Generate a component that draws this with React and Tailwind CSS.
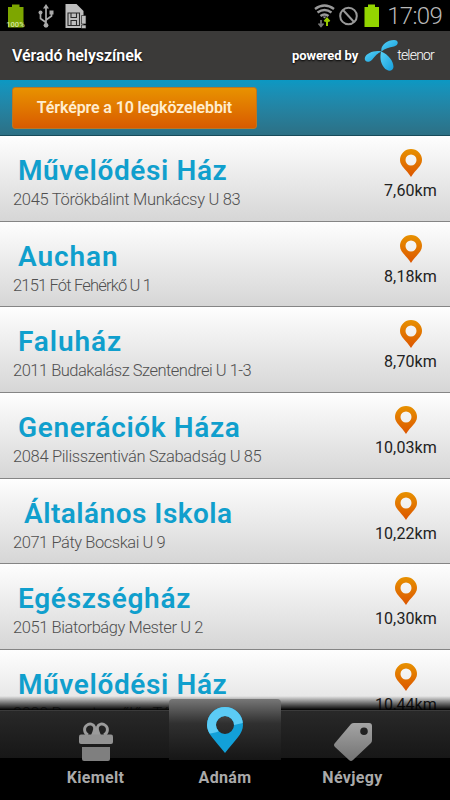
const places = [
  { name: 'Művelődési Ház', address: '2045 Törökbálint Munkácsy U 83', km: '7,60km', title: 'ml-[18px] tracking-[0.62px]', sub: 'tracking-[-0.3px]' },
  { name: 'Auchan', address: '2151 Fót Fehérkő U 1', km: '8,18km', title: 'ml-[18px] tracking-[0.9px]', sub: 'tracking-[-0.82px]' },
  { name: 'Faluház', address: '2011 Budakalász Szentendrei U 1-3', km: '8,70km', title: 'ml-[18px] tracking-[0.9px]', sub: 'tracking-[-0.5px]' },
  { name: 'Generációk Háza', address: '2084 Pilisszentiván Szabadság U 85', km: '10,03km', title: 'ml-[18px] tracking-[0.62px]', sub: 'tracking-[-0.35px]' },
  { name: 'Általános Iskola', address: '2071 Páty Bocskai U 9', km: '10,22km', title: 'ml-[24px] tracking-[0.48px]', sub: 'tracking-[-0.45px]' },
  { name: 'Egészségház', address: '2051 Biatorbágy Mester U 2', km: '10,30km', title: 'ml-[18px] tracking-[0.7px]', sub: 'tracking-[-0.42px]' },
  { name: 'Művelődési Ház', address: '2090 Remeteszőlős Tó U 3', km: '10,44km', title: 'ml-[18px] tracking-[0.62px]', sub: 'tracking-[-0.42px]' },
];

function StatusBar() {
  return (
    <header className="flex h-[31px] shrink-0 items-center bg-black">
      <svg className="ml-[6px] h-[28px] w-[84px]" viewBox="0 0 84 28">
        <path d="M6 2.500h7.500V5h4v20.500H2V5h4z" fill="#7da600" />
        <text x="9.5" y="24.500" textAnchor="middle" fontSize="7.500" fontWeight="500" fontFamily="Roboto, sans-serif" fill="#d5e5a0">100%</text>
        <path d="M40 5v17M40 20.500l-5.500-4V10M40 18l5.500-4V10" stroke="#aaa" strokeWidth="1.700" fill="none" />
        <path d="M37 6.500 40 2l3 4.500z" fill="#aaa" />
        <circle cx="40" cy="23.300" r="2.400" fill="#aaa" />
        <circle cx="34.500" cy="10.500" r="2" fill="#aaa" />
        <path d="M43.500 8.500h4v4h-4z" fill="#aaa" />
        <path d="M59.500 2h11l7 7v17h-18z" fill="#bebebe" />
        <path d="M62 11h11.500v12.500H62zM65 11.500v4h5.500v-4M65 23v-4.500h5.500V23" fill="none" stroke="#292929" strokeWidth="1.100" />
        <path d="M75.500 13.500h4.500v8.500h-4.500zM75.500 23h4.500v3.500h-4.500z" fill="#bebebe" stroke="#111" strokeWidth=".6" />
      </svg>
      <svg className="ml-auto h-[28px] w-[68px]" viewBox="0 0 68 28">
        <path d="M1 7q9.500-7 19 0M3.500 10.500q7-5 14 0M6.500 14q4-3 8 0" fill="none" stroke="#999" strokeWidth="2.400" />
        <path d="M8.500 14.500h4l-2 2z" fill="#999" />
        <path d="M7 18v6M4.500 21.500 7 24.500l2.500-3" fill="none" stroke="#777" strokeWidth="1.700" />
        <path d="M13 24v-6M10.500 19.500l2.500-3 2.500 3" fill="none" stroke="#99cc00" strokeWidth="2" />
        <circle cx="34.500" cy="14" r="8.300" fill="none" stroke="#999" strokeWidth="2" />
        <path d="m29 8 11 12" stroke="#999" strokeWidth="2" />
        <path d="M54 2.500h7V5h4v20H50.500V5H54z" fill="#93d500" />
      </svg>
      <span className="mr-[8px] ml-[5px] font-[Roboto,sans-serif] text-[24px] leading-none font-light tracking-[-0.7px] text-[#b8b8b8]">17:09</span>
    </header>
  );
}

function TelenorMark() {
  return (
    <svg className="h-[34px] w-[34px]" viewBox="0 0 34 34">
      <defs>
        <linearGradient id="petal" x1="0" y1="0" x2="1" y2="1">
          <stop offset="0" stopColor="#58d2f8" />
          <stop offset="1" stopColor="#159edb" />
        </linearGradient>
      </defs>
      <path d="M17.500 12.500C16 7 23 1 30 1c5 0 5 5 0 6.500-5 1-9 2-12.500 5z" fill="url(#petal)" />
      <path d="M17.500 12.500C11 11 2 14 .8 19c-.5 4.500 4.500 5 7.500 1.500 3-3.500 5-6.500 9.200-8z" fill="url(#petal)" />
      <path d="M17 12.500c-1 5-1 11 3 16 3.500 4.500 9 4 9.500-.5 0-6-5-12.500-12.500-15.500z" fill="url(#petal)" />
    </svg>
  );
}

function OrangePin() {
  return (
    <svg className="h-[28px] w-[22px]" viewBox="0 0 22 28">
      <defs>
        <linearGradient id="orangePin" x1="0" y1="0" x2="0" y2="1">
          <stop offset="0" stopColor="#e79100" />
          <stop offset="1" stopColor="#dc5500" />
        </linearGradient>
      </defs>
      <path fillRule="evenodd" d="M11 0a11 11 0 0 1 11 11c0 6-6 9-11 17C6 20 0 17 0 11A11 11 0 0 1 11 0zm0 5.500a5.500 5.500 0 1 0 0 11 5.500 5.500 0 0 0 0-11z" fill="url(#orangePin)" />
    </svg>
  );
}

function PlaceRow({ place }) {
  return (
    <li className="flex h-[85.67px] shrink-0 justify-between border-b border-[#858585] bg-linear-to-b from-[#fefefe] to-[#d6d6d6]">
      <div className="pt-[17px] whitespace-nowrap">
        <h2 className={`text-[28px] leading-[36px] font-semibold text-[#109fcd] ${place.title}`}>{place.name}</h2>
        <p className={`mt-px ml-[13px] text-[16.500px] leading-[20px] font-light text-[#505050] ${place.sub}`}>{place.address}</p>
      </div>
      <div className="mr-[13px] flex flex-col items-center pt-[13px]">
        <OrangePin />
        <span className="mt-[4px] text-[16px] leading-[20px] tracking-[0.12px] text-[#222]">{place.km}</span>
      </div>
    </li>
  );
}

function GiftIcon() {
  return (
    <svg className="h-[40px] w-[34px]" viewBox="0 0 34 40">
      <defs>
        <linearGradient id="grayIcon" x1="0" y1="0" x2="0" y2="1">
          <stop offset="0" stopColor="#a4a4a4" />
          <stop offset="1" stopColor="#737373" />
        </linearGradient>
      </defs>
      <path d="M9 13C5 11 4.500 6 7.500 3.500 10.500 1 14.500 2 15.500 5c1 3-1 5-2 8.500M25 13c4-2 4.500-7 1.500-9.500C23.500 1 19.500 2 18.500 5c-1 3 1 5 2 8.500" fill="none" stroke="#9b9b9b" strokeWidth="2.900" />
      <path d="M15.500 6.500h3l1.500 7h-6z" fill="#9b9b9b" />
      <rect x="0" y="12.500" width="34" height="9.500" rx="2" fill="#929292" />
      <path d="M3 25h28v12a2 2 0 0 1-2 2H5a2 2 0 0 1-2-2z" fill="#7f7f7f" />
    </svg>
  );
}

function BluePin() {
  return (
    <svg className="h-[46px] w-[36px]" viewBox="0 0 36 46">
      <defs>
        <clipPath id="pinTop"><path d="M0 0h36v16Q24 18 17 22T0 27z" /></clipPath>
      </defs>
      <path fillRule="evenodd" d="M18 0a18 18 0 0 1 18 18c0 9-8 15-18 28C8 33 0 27 0 18A18 18 0 0 1 18 0zm0 9a9 9 0 1 0 0 18 9 9 0 0 0 0-18z" fill="#12a0d8" />
      <path clipPath="url(#pinTop)" fillRule="evenodd" d="M18 0a18 18 0 0 1 18 18c0 9-8 15-18 28C8 33 0 27 0 18A18 18 0 0 1 18 0zm0 9a9 9 0 1 0 0 18 9 9 0 0 0 0-18z" fill="#5ccbf5" />
    </svg>
  );
}

function TagIcon() {
  return (
    <svg className="h-[38px] w-[38px]" viewBox="0 0 38 38">
      <path fillRule="evenodd" d="M20 0h15a3 3 0 0 1 3 3v14q0 2-1 3L19 37q-2 2-4 0L1 24q-2-2 0-4L17 1q1-1 3-1zm10 4.500a3.800 3.800 0 1 0 0 7.600 3.800 3.800 0 0 0 0-7.600z" fill="url(#grayIcon)" />
    </svg>
  );
}

export default function App() {
  return (
    <div className="relative flex h-[800px] w-[450px] flex-col overflow-hidden bg-black font-[Roboto,sans-serif]">
      <StatusBar />
      <div className="flex h-[49px] shrink-0 items-center bg-[#3b3a39] pr-[16px] pl-[12px] text-white">
        <h1 className="text-[16px] font-semibold tracking-[-0.05px] [text-shadow:0_1px_2px_#000]">Véradó helyszínek</h1>
        <span className="ml-auto text-[13px] font-bold tracking-[-0.1px] [text-shadow:0_1px_2px_#000]">powered by</span>
        <div className="ml-[6px] flex items-center">
          <TelenorMark />
          <span className="ml-[-1px] text-[14px] font-light tracking-[-0.8px]">telenor</span>
        </div>
      </div>
      <div className="h-[56px] shrink-0 border-b border-[#174b5b] bg-linear-to-b from-[#0b98c3] to-[#2c7085] pt-[7px] pl-[12px]">
        <button className="h-[42px] w-[245px] rounded-[3px] border border-[#b97725] bg-linear-to-b from-[#e89200] to-[#d85a00] text-[16px] font-semibold tracking-[-0.12px] text-[#ffedcf]">Térképre a 10 legközelebbit</button>
      </div>
      <ul className="flex h-[574px] shrink-0 flex-col overflow-hidden">
        {places.map((place, index) => <PlaceRow key={index} place={place} />)}
      </ul>
      <nav className="relative grid h-[90px] shrink-0 grid-cols-[169px_112px_169px] bg-linear-to-b from-[#292929] from-0% via-[#171717] via-[53%] to-black to-[53%] text-[16px] leading-[20px] font-bold tracking-[0.35px] text-[#aaa]">
        <div className="absolute inset-x-0 -top-[14px] h-[14px] bg-linear-to-b from-transparent to-black" />
        <div className="flex flex-col items-center border-t border-[#3b3b3b] pt-[11px] pl-[22px]">
          <GiftIcon />
          <span className="mt-[6px]">Kiemelt</span>
        </div>
        <div className="relative -mt-[11px] flex flex-col items-center pt-[8px]">
          <div className="absolute inset-x-0 top-0 h-[61px] rounded-t-[4px] bg-linear-to-b from-[#777] via-[#303030] via-40% to-[#161616]" />
          <div className="relative flex flex-col items-center">
            <BluePin />
            <span className="mt-[15px]">Adnám</span>
          </div>
        </div>
        <div className="flex flex-col items-center border-t border-[#3b3b3b] pt-[12px] pr-[26px]">
          <TagIcon />
          <span className="mt-[7px]">Névjegy</span>
        </div>
      </nav>
    </div>
  );
}
